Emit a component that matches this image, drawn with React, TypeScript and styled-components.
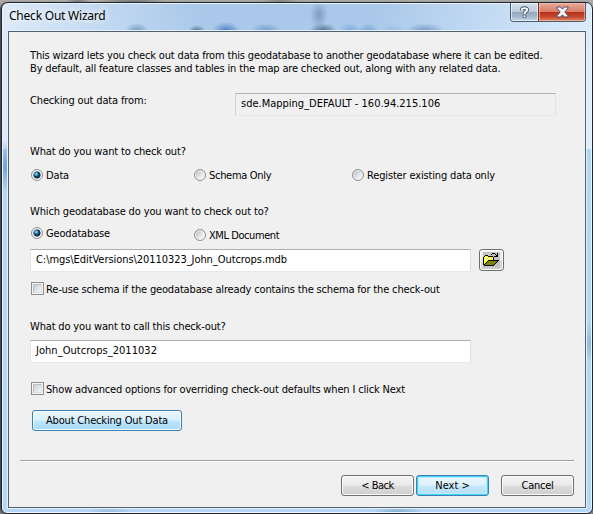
import React from "react";
import styled, { createGlobalStyle, css } from "styled-components";

const GlobalStyle = createGlobalStyle`
  *, *::before, *::after { box-sizing: border-box; }
  body { margin: 0; overflow: hidden; }
`;

const Desktop = styled.div`
  width: 593px;
  height: 514px;
  padding: 2px 0 0 1px;
  background:
    radial-gradient(12px 3px at 78px 1px, #777, transparent),
    radial-gradient(34px 3px at 133px 1px, #777, transparent),
    radial-gradient(20px 3px at 280px 1px, #858585, transparent),
    linear-gradient(180deg, #a9a9a7 0, #8f8f8f 100px, #6d7074 150px, #777b80 100%);
`;

const Window = styled.div`
  width: 592px;
  height: 512px;
  display: flex;
  flex-direction: column;
  padding: 0 6px 5px 6px;
  border: 1px solid #20262d;
  border-radius: 7px 7px 6px 6px;
  box-shadow: inset 0 0 0 1px #eaf5ff, -1px 0 1px #444;
  background:
    radial-gradient(9px 14px at 317px 12px, #7f9cc0, transparent),
    radial-gradient(14px 8px at 321px 28px, #4f6a88, transparent),
    radial-gradient(12px 8px at 135px 28px, #6d9ab8, transparent),
    radial-gradient(9px 7px at 195px 29px, #45607f, transparent),
    radial-gradient(14px 9px at 224px 28px, #4a7ac0, transparent),
    radial-gradient(16px 8px at 264px 28px, #6f9cc6, transparent),
    radial-gradient(11px 8px at 348px 28px, #7aa8d6, transparent),
    radial-gradient(11px 8px at 366px 28px, #7aa8d6, transparent),
    radial-gradient(12px 8px at 391px 28px, #98bcdf, transparent),
    radial-gradient(20px 8px at 423px 28px, #7098c4, transparent),
    radial-gradient(8px 26px at 3px 163px, #6fa2db, transparent),
    radial-gradient(26px 8px at 396px 510px, #80acc8, transparent),
    radial-gradient(24px 6px at 108px 510px, #94b9de, transparent),
    radial-gradient(8px 20px at 588px 340px, #8bb9df, transparent),
    linear-gradient(90deg, rgba(232, 242, 252, 0.8) 0, rgba(215, 230, 247, 0.6) 90px, transparent 200px, transparent 370px, rgba(220, 236, 252, 0.65) 520px, rgba(232, 244, 255, 0.8) 100%) 0 0 / 100% 146px no-repeat,
    linear-gradient(180deg, #a9c7e8 0, #accdf0 60px, #b5d7f8 180px, #b4d6f7 100%);
`;

const TitleBar = styled.header`
  display: flex;
  justify-content: space-between;
  height: 28px;
  flex: none;
  padding: 0 0 0 1px;
`;

const Title = styled.h1`
  margin: 4px 0 0;
  font: 12px/17px "Noto Sans", sans-serif;
  letter-spacing: -0.22px;
  color: #000;
  text-shadow: 0 0 6px #fff, 0 0 8px #fff;
  white-space: nowrap;
`;

const Controls = styled.div`
  display: flex;
  height: 19px;
  width: 76px;
  border: 1px solid #4e5c6b;
  border-top: 0;
  border-radius: 0 0 4px 4px;
  overflow: hidden;
`;

const ControlButton = styled.button<{ $close?: boolean }>`
  display: flex;
  align-items: center;
  justify-content: center;
  width: ${(p) => (p.$close ? 47 : 27)}px;
  height: 18px;
  padding: 0;
  border: 0;
  ${(p) =>
    p.$close
      ? css`
          border-left: 1px solid #782b20;
          box-shadow: inset 0 0 0 1px rgba(255, 205, 190, 0.55);
          background: linear-gradient(180deg, #e7aa9c 0, #d97d6b 48%, #b93019 52%, #c4452c 75%, #e18862 100%);
        `
      : css`
          box-shadow: inset 0 0 0 1px rgba(255, 255, 255, 0.6);
          background: linear-gradient(180deg, #d3e0ed 0, #bccbdb 48%, #94a8bd 52%, #a5b8cb 75%, #c4d9eb 100%);
        `}
`;

const Panel = styled.main`
  flex: 1;
  display: flex;
  flex-direction: column;
  padding: 17px 11px 0 21px;
  border: 1px solid #53616f;
  outline: 1px solid #e5f2fd;
  background: #f0f0f0;
`;

const Text = styled.span<{ $track?: number; $top?: number }>`
  display: block;
  font: 11px/13px "DejaVu Sans Condensed", "DejaVu Sans", sans-serif;
  font-stretch: condensed;
  letter-spacing: ${(p) => p.$track ?? 0}px;
  margin-top: ${(p) => p.$top ?? 0}px;
  color: #000;
  white-space: pre;
`;

const SourceRow = styled.div`
  display: grid;
  grid-template-columns: 205px 321px;
  margin-top: 18px;
`;

const Field = styled.div<{ $readOnly?: boolean }>`
  height: 23px;
  padding: 3px 0 0 5px;
  border: 1px solid #e3e9ef;
  border-top-color: #abadb3;
  border-left-color: #e2e3ea;
  border-right-color: #dbdfe6;
  border-radius: 1px;
  background: ${(p) => (p.$readOnly ? "#f0f0f0" : "#fff")};
  ${(p) => p.$readOnly && css`border-color: #b0b2b8 #e0e6ee #e3e9ef #d0d2d8;`}
`;

const RadioRow = styled.div<{ $top: number }>`
  display: grid;
  grid-template-columns: 163px 158px 1fr;
  margin: ${(p) => p.$top}px 0 0 1px;
`;

const Option = styled.label<{ $drop?: number }>`
  display: flex;
  gap: 3px;
  height: 13px;
  margin-top: ${(p) => p.$drop ?? 0}px;
`;

const RadioDot = styled.span<{ $checked?: boolean }>`
  width: 12px;
  height: 12px;
  flex: none;
  border: 1px solid #8e8f8f;
  border-radius: 50%;
  box-shadow: inset 0 0 0 1px #f4f4f4;
  background: ${(p) =>
    p.$checked
      ? "radial-gradient(circle at 4.2px 4px, #a5e3f8 0, #3e9ac5 1.5px, transparent 2.6px), radial-gradient(circle at 5px 5px, #125078 0, #0b304d 3.2px, #f3f4f4 4px)"
      : "linear-gradient(135deg, #b9bec4 10%, #dfe2e5 50%, #fafafa 85%)"};
`;

const CheckRow = styled.label<{ $top: number }>`
  display: flex;
  gap: 3px;
  height: 13px;
  margin: ${(p) => p.$top}px 0 0 0;
  padding-left: 1px;
`;

const CheckBox = styled.span`
  width: 13px;
  height: 13px;
  flex: none;
  margin-right: -1px;
  border: 1px solid #8e8f8f;
  padding: 1px;
  background: #f4f4f4;

  &::after {
    content: "";
    display: block;
    height: 9px;
    border: 1px solid #bbc0c6;
    border-right-color: #dcdfe2;
    border-bottom-color: #dcdfe2;
    background: linear-gradient(135deg, #cbcfd5, #f6f6f6);
  }
`;

const InputRow = styled.div`
  display: grid;
  grid-template-columns: 441px 25px;
  column-gap: 8px;
  margin: 7px 0 0 0;
`;

const Button = styled.button<{ $kind?: "hot" | "default"; $width: number }>`
  display: flex;
  justify-content: center;
  width: ${(p) => p.$width}px;
  height: 21px;
  padding: 3px 0 0;
  border-radius: 3px;
  ${(p) =>
    p.$kind === "hot"
      ? css`
          border: 1px solid #3c7fb1;
          box-shadow: inset 0 0 0 1px #f5fbfe;
          background: linear-gradient(180deg, #eaf6fd 0, #d9f0fc 48%, #bee6fd 52%, #a7d9f5 100%);
        `
      : p.$kind === "default"
      ? css`
          border: 1px solid #3c7fb1;
          box-shadow: inset 0 0 0 1px #42d2fa, inset 0 0 0 2px #b9ebfb;
          background: linear-gradient(180deg, #eef7fc 0, #def1fb 48%, #c5e7fa 52%, #b3def5 100%);
        `
      : css`
          border: 1px solid #707070;
          box-shadow: inset 0 0 0 1px #fbfbfb;
          background: linear-gradient(180deg, #f2f2f2 0, #ebebeb 48%, #dddddd 52%, #cfcfcf 100%);
        `}
`;

const BrowseButton = styled.button`
  display: flex;
  align-items: center;
  justify-content: center;
  width: 25px;
  height: 22px;
  padding: 0;
  border: 1px solid #707070;
  border-radius: 3px;
  box-shadow: inset 0 0 0 1px #fbfbfb;
  background: linear-gradient(180deg, #f2f2f2 0, #ebebeb 48%, #dddddd 52%, #cfcfcf 100%);
`;

const AboutRow = styled.div`
  display: flex;
  margin: 15px 0 0 2px;
`;

const Divider = styled.hr`
  width: 554px;
  height: 2px;
  margin: 29px 0 0 -10px;
  border: 0;
  border-top: 1px solid #a0a0a0;
  border-bottom: 1px solid #fff;
`;

const Footer = styled.footer`
  display: flex;
  justify-content: flex-end;
  gap: 2px;
  margin-top: 13px;
`;

const FooterGap = styled.span`
  width: 8px;
`;

const HelpIcon = () => (
  <svg width="11" height="13" viewBox="0 0 11 13" fill="none">
    <path d="M2.8 4.6V3.4Q3 2 5.5 2T8.2 3.7Q8.2 4.8 6.8 5.6 5.5 6.4 5.5 8.3M5.5 9.3V11.8" stroke="#424d60" strokeWidth="3.6" />
    <path d="M2.8 4.4V3.6Q3 2.1 5.5 2.1T8.2 3.7Q8.2 4.8 6.8 5.6 5.5 6.4 5.5 8M5.5 9.4V11.2" stroke="#fff" strokeWidth="1.9" />
  </svg>
);

const CloseIcon = () => (
  <svg width="13" height="12" viewBox="0 0 13 12">
    <path
      d="M1 1H4.6L6.5 3.1 8.4 1H12V2.2L8.8 6 12 9.8V11H8.4L6.5 8.9 4.6 11H1V9.8L4.2 6 1 2.2Z"
      fill="#f6f6f6"
      stroke="#494f62"
      strokeWidth="1"
    />
  </svg>
);

const FolderIcon = () => (
  <svg width="17" height="16" viewBox="0 0 17 16" shapeRendering="crispEdges">
    <rect width="17" height="16" fill="#c4c4c4" />
    <path d="M1 5H2V4H5V5H10V8H5V9H4V10H3V11H2V12H1Z" fill="#ffff28" />
    <path d="M2 5H3V6H2ZM4 5H5V6H4ZM3 6H4V7H3ZM5 6H6V7H5ZM7 6H8V7H7ZM9 6H10V7H9ZM2 7H3V8H2ZM4 7H5V8H4ZM6 7H7V8H6ZM3 8H4V9H3Z" fill="#fff" />
    <path d="M5 9H15V10H14V11H13V12H12V13H2V12H3V11H4V10H5Z" fill="#808000" />
    <path
      d="M1 4H2V3H5V4H10V5H11V8H16V9H15V10H14V11H13V12H12V13H11V14H1V13H0V5H1ZM1 5V12H2V11H3V10H4V9H5V8H10V5H5V4H2V5ZM5 9V10H4V11H3V12H2V13H11V12H12V11H13V10H14V9Z"
      fill="#000"
      fillRule="evenodd"
    />
    <path d="M9 1H12V2H13V3H14V1H15V5H11V4H13V3H12V2H9V3H8V2H9Z" fill="#000" />
  </svg>
);

type RadioProps = { label: string; track: number; checked?: boolean; drop?: number };

const Radio = ({ label, track, checked, drop }: RadioProps) => (
  <Option $drop={drop}>
    <RadioDot $checked={checked} role="radio" aria-checked={!!checked} />
    <Text $track={track}>{label}</Text>
  </Option>
);

export default function App() {
  return (
    <>
      <GlobalStyle />
      <Desktop>
        <Window>
          <TitleBar>
            <Title>Check Out Wizard</Title>
            <Controls>
              <ControlButton aria-label="Help">
                <HelpIcon />
              </ControlButton>
              <ControlButton $close aria-label="Close">
                <CloseIcon />
              </ControlButton>
            </Controls>
          </TitleBar>
          <Panel>
            <Text $track={-0.163}>
              This wizard lets you check out data from this geodatabase to another geodatabase where it can be edited.
            </Text>
            <Text $track={-0.163}>
              By default, all feature classes and tables in the map are checked out, along with any related data.
            </Text>
            <SourceRow>
              <Text $track={-0.15} $top={1}>Checking out data from:</Text>
              <Field $readOnly>
                <Text>sde.Mapping_DEFAULT - 160.94.215.106</Text>
              </Field>
            </SourceRow>

            <Text $track={-0.14} $top={29}>What do you want to check out?</Text>
            <RadioRow $top={11}>
              <Radio label="Data" track={-0.15} checked />
              <Radio label="Schema Only" track={-0.3} />
              <Radio label="Register existing data only" track={-0.155} />
            </RadioRow>

            <Text $track={-0.14} $top={23}>Which geodatabase do you want to check out to?</Text>
            <RadioRow $top={9}>
              <Radio label="Geodatabase" track={-0.155} checked />
              <Radio label="XML Document" track={-0.43} drop={2} />
            </RadioRow>
            <InputRow>
              <Field>
                <Text $track={-0.06}>{"C:\\mgs\\EditVersions\\20110323_John_Outcrops.mdb"}</Text>
              </Field>
              <BrowseButton aria-label="Browse">
                <FolderIcon />
              </BrowseButton>
            </InputRow>
            <CheckRow $top={10}>
              <CheckBox />
              <Text $track={-0.16} $top={1}>
                Re-use schema if the geodatabase already contains the schema for the check-out
              </Text>
            </CheckRow>

            <Text $track={-0.16} $top={25}>What do you want to call this check-out?</Text>
            <InputRow>
              <Field>
                <Text $track={0.04}>John_Outcrops_2011032</Text>
              </Field>
            </InputRow>
            <CheckRow $top={19}>
              <CheckBox />
              <Text $track={-0.16} $top={1}>
                Show advanced options for overriding check-out defaults when I click Next
              </Text>
            </CheckRow>
            <AboutRow>
              <Button $kind="hot" $width={150}>
                <Text $track={-0.175}>About Checking Out Data</Text>
              </Button>
            </AboutRow>

            <Divider />
            <Footer>
              <Button $width={73}>
                <Text $track={-0.5}>{"< Back"}</Text>
              </Button>
              <Button $kind="default" $width={73}>
                <Text>{"Next >"}</Text>
              </Button>
              <FooterGap />
              <Button $width={73}>
                <Text $track={-0.25}>Cancel</Text>
              </Button>
            </Footer>
          </Panel>
        </Window>
      </Desktop>
    </>
  );
}
